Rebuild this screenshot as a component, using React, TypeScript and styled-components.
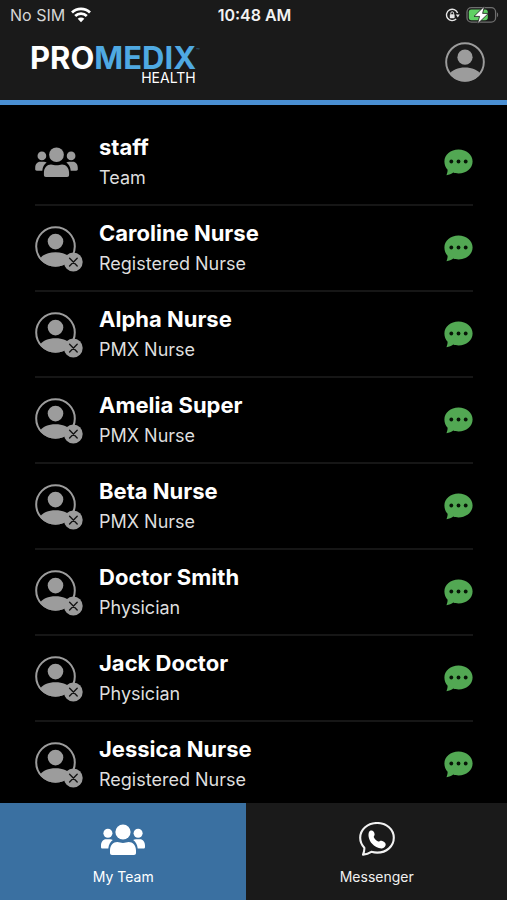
import React from "react";
import styled, { createGlobalStyle } from "styled-components";

const GlobalStyle = createGlobalStyle`
  * { box-sizing: border-box; }
  body { margin: 0; background: #000; }
  button { font: inherit; color: inherit; border: 0; padding: 0; background: none; cursor: pointer; }
`;

const Screen = styled.div`
  display: flex;
  flex-direction: column;
  height: 100vh;
  background: #000;
  color: #fff;
  font-family: Inter, "Liberation Sans", sans-serif;
`;

const StatusBar = styled.div`
  display: grid;
  grid-template-columns: 1fr auto 1fr;
  align-items: center;
  height: 30px;
  padding: 0 8px 0 10px;
  background: #1a1a1a;
  font-size: 16px;
  line-height: 20px;
`;

const StatusGroup = styled.div<{ $end?: boolean }>`
  display: flex;
  align-items: center;
  justify-content: ${(p) => (p.$end ? "flex-end" : "flex-start")};
  gap: 6px;
  color: #d6d6d6;
`;

const Time = styled.time`
  font-weight: 600;
  color: #f2f2f2;
`;

const Header = styled.header`
  display: flex;
  align-items: flex-start;
  justify-content: space-between;
  height: 75px;
  padding: 12px 22px 0 30px;
  background: #1a1a1a;
  border-bottom: 5px solid #4a8fd3;
`;

const Logo = styled.div`
  display: flex;
  flex-direction: column;
  align-items: flex-end;
  padding-top: 3px;
`;

const LogoName = styled.div`
  display: flex;
  font-size: 31px;
  line-height: 26px;
  font-weight: 700;
`;

const LogoAccent = styled.span`
  color: #4fa9e2;
`;

const LogoSub = styled.div`
  padding-right: 4px;
  font-size: 14px;
  line-height: 14px;
`;

const Trademark = styled.span`
  align-self: flex-start;
  color: #35739b;
  font-size: 6px;
  line-height: 12px;
  font-weight: 400;
`;

const List = styled.ul`
  flex: 1;
  min-height: 0;
  margin: 0;
  padding: 15px 34px 0 35px;
  list-style: none;
  overflow-y: auto;
  scrollbar-width: none;
`;

const Row = styled.li`
  display: flex;
  align-items: center;
  height: 86px;
  border-bottom: 2px solid #161616;
`;

const IconSlot = styled.div`
  display: flex;
  flex: 0 0 64px;
`;

const Details = styled.div`
  flex: 1;
  min-width: 0;
`;

const Name = styled.div`
  font-size: 22px;
  line-height: 31px;
  font-weight: 700;
`;

const Role = styled.div`
  font-size: 18px;
  line-height: 30px;
  color: #dedede;
`;

const IconButton = styled.button`
  display: flex;
`;

const Nav = styled.nav`
  display: grid;
  grid-template-columns: 35fr 37fr;
  height: 97px;
`;

const Tab = styled.button<{ $active?: boolean }>`
  && {
    display: flex;
    flex-direction: column;
    align-items: center;
    justify-content: flex-start;
    gap: 10px;
    padding-top: 18px;
    background: ${(p) => (p.$active ? "#3a70a1" : "#1a1a1a")};
    color: ${(p) => (p.$active ? "#fff" : "#f0f0f0")};
    font-size: 14px;
    line-height: 20px;
  }
`;

const TabIcon = styled.span`
  display: flex;
  align-items: center;
  height: 36px;
`;

const WifiIcon = () => (
  <svg width="20" height="16" viewBox="0 0 20 16" fill="none" stroke="#fff" strokeWidth="2.7" aria-hidden="true">
    <path d="M1 5.5a12.8 12.8 0 0 1 18 0" />
    <path d="M4.2 9a8.2 8.2 0 0 1 11.6 0" />
    <path d="M10 15.2 6.7 11.8a4.7 4.7 0 0 1 6.6 0Z" fill="#fff" stroke="none" />
  </svg>
);

const LockIcon = () => (
  <svg width="15" height="14" viewBox="0 0 15 14" fill="none" stroke="#e6e6e6" aria-hidden="true">
    <path d="M12.600 5A5.700 5.700 0 1 0 11.200 11" strokeWidth="1.400" />
    <path d="M10.800 6.400h4l-2 3Z" fill="#e6e6e6" stroke="none" />
    <rect x="4.800" y="6.300" width="4.800" height="3.900" rx=".6" fill="#e6e6e6" stroke="none" />
    <path d="M5.800 6.500V5.200a1.400 1.400 0 0 1 2.800 0v1.300" strokeWidth="1" />
  </svg>
);

const BatteryIcon = () => (
  <svg width="33" height="18" viewBox="0 0 33 18" aria-hidden="true">
    <rect x="1" y="1.600" width="28.600" height="14.600" rx="4.400" fill="none" stroke="#6f6f6f" strokeWidth="1.300" />
    <path d="M31 6.600c1.500.5 1.500 4.100 0 4.600Z" fill="#6f6f6f" />
    <rect x="2.800" y="3.600" width="19" height="10.600" rx="2.600" fill="#5fd163" />
    <path d="M18.600 0 8 10.400h5.600L11.400 18 22.400 7.400h-5.800Z" fill="#fff" stroke="#1a1a1a" strokeWidth=".8" />
  </svg>
);

const AvatarIcon = ({ id, size, badge }: { id: string; size: number; badge?: boolean }) => (
  <svg width={badge ? 49 : size} height={badge ? 48 : size} viewBox={badge ? "0 -2 49 48" : "0 0 41 41"} aria-hidden="true">
    <clipPath id={id}>
      <circle cx="20.5" cy="20.5" r="20" />
    </clipPath>
    <circle cx="20.5" cy="20.5" r="19.300" fill="none" stroke="#9c9c9c" strokeWidth="2" />
    <circle cx="20.5" cy="15.6" r="7.8" fill="#9c9c9c" />
    <path clipPath={`url(#${id})`} d="M5 33c2-4.4 8.500-6.800 15.500-6.800S34 28.600 36 33v9H5Z" fill="#9c9c9c" />
    {badge && (
      <>
        <circle cx="38.300" cy="36" r="9.400" fill="#9c9c9c" />
        <path d="m34.600 32.300 7.600 7.600m0-7.600-7.600 7.600" stroke="#151515" strokeWidth="1.400" strokeLinecap="round" />
      </>
    )}
  </svg>
);

const TeamIcon = ({ width, color }: { width: number; color: string }) => (
  <svg width={width} height={Math.round((width * 31) / 44)} viewBox="0 0 44 31" fill={color} aria-hidden="true">
    <circle cx="22" cy="8" r="7.600" />
    <circle cx="6.900" cy="9.200" r="4.500" />
    <circle cx="37.100" cy="9.200" r="4.500" />
    <path d="M9 29V26.500C9 21.300 12.300 18 16.300 18c2 0 3.400.9 5.700.9s3.700-.9 5.700-.9c4 0 7.300 3.300 7.300 8.500V29c0 1.200-.8 2-2 2H11c-1.200 0-2-.8-2-2Z" />
    <path d="M1.600 24.500C.6 24.500 0 24 0 23v-1.500c0-3.600 2.200-6.200 5-6.200h4c1.100 0 2 .3 2.800.8-2.500 1.700-4.100 4.600-4.500 8.400Z" />
    <path d="M42.400 24.500c1 0 1.600-.5 1.600-1.500v-1.500c0-3.600-2.200-6.200-5-6.200h-4c-1.100 0-2 .3-2.800.8 2.500 1.700 4.100 4.600 4.500 8.400Z" />
  </svg>
);

const ChatIcon = () => (
  <svg width="29" height="27" viewBox="0 0 29 27" aria-hidden="true">
    <path d="M14.500.4C22.400.4 28.600 5.600 28.600 12.400S22.400 24.400 14.500 24.400c-2 0-3.600-.2-5.200-.8-1.900 1.300-4.200 2.300-6.800 2.700.4-1.400 1.200-3.500 1.100-5.500C1.500 18.600.4 15.600.4 12.400.4 5.600 6.600.4 14.500.4Z" fill="#52a853" />
    <g fill="#071507">
      <circle cx="7.300" cy="12.500" r="1.900" />
      <circle cx="14.500" cy="12.500" r="1.900" />
      <circle cx="21.700" cy="12.500" r="1.900" />
    </g>
  </svg>
);

const MessengerIcon = () => (
  <svg width="36" height="34" viewBox="0 0 36 34" fill="none" aria-hidden="true">
    <path d="M18.200 1C27.600 1 34.800 7.400 34.800 15.800S27.600 30.600 18.200 30.600c-2.200 0-4-.3-5.900-.8-2.300 1.500-5 2.500-8.300 2.900.9-2.200 1.600-4.500 1.300-7C2.700 23 1.200 19.700 1.200 15.800 1.200 7.400 8.600 1 18.200 1Z" stroke="#f2f2f2" strokeWidth="2.100" strokeLinejoin="round" />
    <path d="M9.900 10.200c.5-1.300 1.900-2 3.100-1.600 1.400.4 2.300 1.900 2.600 3.300.2 1.300-.9 2-.9 3.200 1 2.100 2.500 3.500 4.500 4.500 1.300-.1 2-1.100 3.400-.8 1.700.4 4 1.800 4.100 3.500.1 2.100-1.600 4-3.900 4.200-3.500.2-7.400-2.100-9.900-4.900-2.400-2.700-4.300-7.800-3-11.400Z" fill="#fff" />
  </svg>
);

const members = [
  { name: "staff", role: "Team", team: true },
  { name: "Caroline Nurse", role: "Registered Nurse" },
  { name: "Alpha Nurse", role: "PMX Nurse" },
  { name: "Amelia Super", role: "PMX Nurse" },
  { name: "Beta Nurse", role: "PMX Nurse" },
  { name: "Doctor Smith", role: "Physician" },
  { name: "Jack Doctor", role: "Physician" },
  { name: "Jessica Nurse", role: "Registered Nurse" },
];

export default function App() {
  return (
    <Screen>
      <GlobalStyle />
      <StatusBar>
        <StatusGroup>
          No SIM
          <WifiIcon />
        </StatusGroup>
        <Time>10:48 AM</Time>
        <StatusGroup $end>
          <LockIcon />
          <BatteryIcon />
        </StatusGroup>
      </StatusBar>
      <Header>
        <Logo>
          <LogoName>
            PRO<LogoAccent>MEDIX</LogoAccent>
            <Trademark>™</Trademark>
          </LogoName>
          <LogoSub>HEALTH</LogoSub>
        </Logo>
        <IconButton type="button" aria-label="Profile">
          <AvatarIcon id="profile" size={40} />
        </IconButton>
      </Header>
      <List>
        {members.map((m, i) => (
          <Row key={m.name}>
            <IconSlot>{m.team ? <TeamIcon width={43} color="#9c9c9c" /> : <AvatarIcon id={`member-${i}`} size={41} badge />}</IconSlot>
            <Details>
              <Name>{m.name}</Name>
              <Role>{m.role}</Role>
            </Details>
            <IconButton type="button" aria-label={`Message ${m.name}`}>
              <ChatIcon />
            </IconButton>
          </Row>
        ))}
      </List>
      <Nav>
        <Tab type="button" $active>
          <TabIcon>
            <TeamIcon width={44} color="#fff" />
          </TabIcon>
          My Team
        </Tab>
        <Tab type="button">
          <TabIcon>
            <MessengerIcon />
          </TabIcon>
          Messenger
        </Tab>
      </Nav>
    </Screen>
  );
}
